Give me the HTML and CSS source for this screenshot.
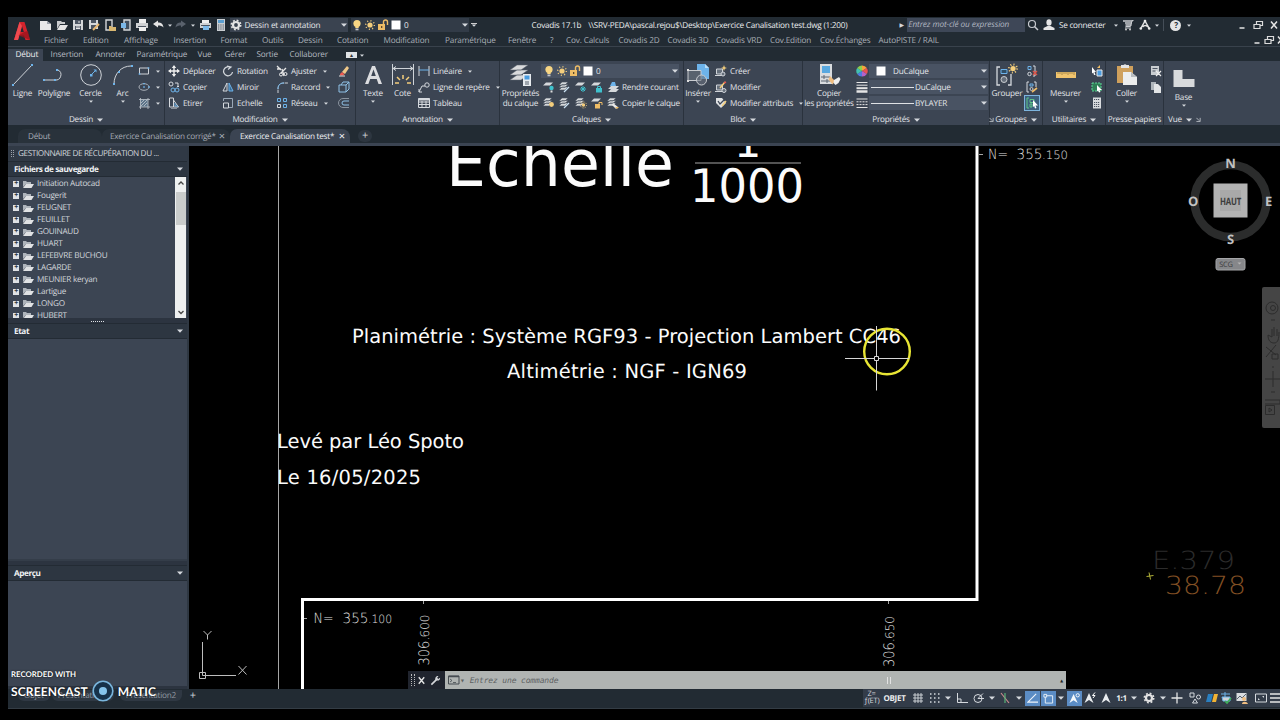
FILE: index.html
```html
<!DOCTYPE html>
<html lang="fr">
<head>
    <meta charset="UTF-8">
    <meta name="viewport" content="width=device-width, initial-scale=1.0">
    <title>Covadis 17.1b</title>
    <link rel="stylesheet" href="styles.css">
</head>
<body>
    <!-- icon set -->
    <svg class="sprite" width="0" height="0">
        <symbol id="caret" viewBox="0 0 6 4"><path d="M0 .5h6L3 3.8z" fill="#d5d9de"/></symbol>
        <symbol id="new" viewBox="0 0 12 12"><path d="M0 2h7l4 3v6H0z" fill="#e8e8e8"/><path d="M7 2v3h4" fill="#9aa0a8"/></symbol>
        <symbol id="open" viewBox="0 0 12 12"><path d="M1 10V2h4l1 1h3v2H4z" fill="#c9cbcd"/><path d="M4 6h8l-3 5H1z" fill="#e5e5e5"/></symbol>
        <symbol id="save" viewBox="0 0 12 12"><path d="M1 1h10v10H1z" fill="#d5d7d9"/><path d="M3 1h6v4H3zM3 7h6v4H3z" fill="#4c5562"/><path d="M4 8h4M4 9.500h4M7 2v2" stroke="#e6e6e6"/></symbol>
        <symbol id="saveas" viewBox="0 0 12 12"><path d="M1 1h9v9H1z" fill="#d5d7d9"/><path d="M3 1h5v3H3zM3 6h5v4H3z" fill="#4c5562"/><path d="M5 11l6-6" stroke="#e9b872" stroke-width="2"/></symbol>
        <symbol id="webopen" viewBox="0 0 12 12"><path d="M2 1h6v10H2z" fill="none" stroke="#d5d7d9" stroke-width="1.400"/><path d="M5 7h2l1 1h4v4H5z" fill="#d9b871"/></symbol>
        <symbol id="websave" viewBox="0 0 12 12"><path d="M4 1h6v10H4z" fill="#42505f" stroke="#d5d7d9" stroke-width="1.400"/><path d="M1 4h5v5H1z" fill="#7bb8e8"/></symbol>
        <symbol id="print" viewBox="0 0 12 12"><path d="M3 0h7v4H3z" fill="#eee"/><path d="M0 4h12v5H0z" fill="#cfd1d3"/><path d="M3 7h7v5H3z" fill="#eee"/><path d="M2 7.500h8" stroke="#4c5562"/></symbol>
        <symbol id="plot" viewBox="0 0 12 12"><path d="M3 1h7v3H3z" fill="#eee"/><path d="M1 4h11v5H1z" fill="#cfd1d3"/><path d="M4 7h6v4H4z" fill="#7bb8e8"/><path d="M2 6.500h9" stroke="#4c5562"/></symbol>
        <symbol id="undo" viewBox="0 0 12 12"><path d="M1 5l5-3.500v2c3 0 5 1 5.500 5C10 7 8.500 6.500 6 6.500v2z" fill="#e5e5e5"/></symbol>
        <symbol id="redo" viewBox="0 0 12 12"><path d="M11 5L6 1.500v2c-3 0-5 1-5.500 5C2 7 3.500 6.500 6 6.500v2z" fill="#59616c"/></symbol>
        <symbol id="calc" viewBox="0 0 12 12"><path d="M2 0h8v12H2z" fill="#c9cdd1"/><path d="M3 1h6v3H3z" fill="#5c9fd0"/><path d="M3 6h6M3 8h6M3 10h6" stroke="#555f6b" stroke-dasharray="1.300 1"/></symbol>
        <symbol id="gear" viewBox="0 0 12 12"><circle cx="6" cy="6" r="3" fill="none" stroke="#e3e3e3" stroke-width="2.200"/><circle cx="6" cy="6" r="4.700" fill="none" stroke="#e3e3e3" stroke-width="1.600" stroke-dasharray="1.850 1.850"/></symbol>
        <symbol id="bulb" viewBox="0 0 12 12"><circle cx="6" cy="4.500" r="3.600" fill="#f7d583"/><path d="M4.300 7h3.400v2H4.300z" fill="#f7d583"/><path d="M4.500 9.500h3v1.800h-3z" fill="#c4c7ca"/></symbol>
        <symbol id="sun" viewBox="0 0 12 12"><circle cx="6" cy="6" r="2.600" fill="#f3cd7c"/><circle cx="6" cy="6" r="4.300" fill="none" stroke="#f3cd7c" stroke-width="1.500" stroke-dasharray="1 2.370"/></symbol>
        <symbol id="lock" viewBox="0 0 12 12"><path d="M1 5h7v6H1z" fill="#efbd66"/><path d="M6.500 5V3a2 2 0 0 1 4 0v3" fill="none" stroke="#efbd66" stroke-width="1.400"/><path d="M4 7h1.300v2H4z" fill="#5a4a30"/></symbol>
        <symbol id="white" viewBox="0 0 12 12"><path d="M1.500 1.500h9v9h-9z" fill="#fff"/></symbol>
        <symbol id="search" viewBox="0 0 12 12"><circle cx="5" cy="5" r="3.500" fill="none" stroke="#c8cbd0" stroke-width="1.200"/><path d="M7.500 7.500L11 11" stroke="#c8cbd0" stroke-width="1.500"/></symbol>
        <symbol id="user" viewBox="0 0 12 12"><ellipse cx="6" cy="3.500" rx="2.600" ry="3.200" fill="#e5e5e5"/><path d="M.5 11V9l4-2h3l4 2v2z" fill="#e5e5e5"/></symbol>
        <symbol id="cart" viewBox="0 0 12 12"><path d="M1 2h9.500M3 4h7M3.500 6h6" stroke="#c9ccd0" stroke-width="1.300"/><path d="M11.500 1.500h-1.500l-1.500 6H3.500M3 9h6" fill="none" stroke="#c9ccd0"/><circle cx="4" cy="10.500" r="1" fill="#ccc"/><circle cx="8" cy="10.500" r="1" fill="#ccc"/></symbol>
        <symbol id="adsk" viewBox="0 0 12 12"><path d="M2 9L6 2l4 7M3.500 8c2-2 3.500-2 5.500 0" fill="none" stroke="#e3e3e3" stroke-width="1.500"/><circle cx="6" cy="2" r="1.300" fill="#eee"/><circle cx="1.800" cy="9.500" r="1.300" fill="#eee"/><circle cx="10.200" cy="9.500" r="1.300" fill="#eee"/></symbol>
        <symbol id="min" viewBox="0 0 12 12"><path d="M3.500 9h5" stroke="#e5e5e5" stroke-width="1.500"/></symbol>
        <symbol id="restore" viewBox="0 0 12 12"><path d="M2 5.500h6v4H2zM4.500 5V2.500h6v4H8.500" fill="none" stroke="#dcdcdc" stroke-width="1.200"/></symbol>
        <symbol id="close" viewBox="0 0 12 12"><path d="M3 2.500l6 7M9 2.500l-6 7" stroke="#e5e5e5" stroke-width="1.500"/></symbol>

        <symbol id="line" viewBox="0 0 24 24"><path d="M2 22L21 2" stroke="#cfd3d8"/><path d="M1 21h2v2H1zM20 1h2v2h-2z" fill="#6db3ea"/></symbol>
        <symbol id="pline" viewBox="0 0 24 24"><path d="M2 17h11a5.300 5.300 0 0 0 3-10" fill="none" stroke="#cfd3d8"/><path d="M1 16h2v2H1zM14 6h2v2h-2zM12 16h2v2h-2z" fill="#6db3ea"/></symbol>
        <symbol id="circle" viewBox="0 0 24 24"><circle cx="12" cy="12" r="10.300" fill="none" stroke="#cfd3d8"/><path d="M12 12l4-4" stroke="#6db3ea"/><path d="M11 11h2.500v2.500H11zM14.500 6.500h3v3z" fill="#6db3ea"/></symbol>
        <symbol id="arc" viewBox="0 0 24 24"><path d="M3 21C3 11 10 3 20 3" fill="none" stroke="#cfd3d8"/><path d="M2 20h2v2H2zM7 8h2v2H7zM20 2h2v2h-2z" fill="#6db3ea"/></symbol>
        <symbol id="rect" viewBox="0 0 12 12"><path d="M1.500 3h9v6h-9z" fill="none" stroke="#cfd3d8"/><path d="M.7 8.200h1.600v1.600H.7zM9.700 2.200h1.600v1.600H9.700z" fill="#6db3ea"/></symbol>
        <symbol id="ellipse" viewBox="0 0 12 12"><ellipse cx="6" cy="6" rx="5" ry="3.300" fill="none" stroke="#aab0b8"/><path d="M5.200 5.200h1.600v1.600H5.200zM10.200 5.200h1.600v1.600h-1.600zM5.200 2h1.600v1.200H5.200z" fill="#6db3ea"/></symbol>
        <symbol id="hatch" viewBox="0 0 12 12"><path d="M2.500 2.500h7.500v7.500H2.500z" fill="#5d7489"/><path d="M1 2.500h11M1 10h11M2.500 1v11M10 1v11M3 6l3-3M3 9l6-6M6 9l3-3" stroke="#c0c7ce" stroke-width=".8"/></symbol>
        <symbol id="move" viewBox="0 0 12 12"><path d="M6 1v10M1 6h10" stroke="#eee" stroke-width="1.400"/><path d="M6 0l2.200 3H3.800zM6 12l2.200-3H3.800zM0 6l3-2.200v4.400zM12 6L9 3.800v4.400z" fill="#eee"/></symbol>
        <symbol id="rotate" viewBox="0 0 12 12"><path d="M8 2.200A4.500 4.500 0 1 0 10.500 7M5 1l4 1-3 2.500" fill="none" stroke="#d5d9de" stroke-width="1.200"/></symbol>
        <symbol id="trim" viewBox="0 0 12 12"><path d="M1 1l4 4M1 4h4M6 4l2 7M10 3L5 8" stroke="#e5e5e5" stroke-width="1.300"/><circle cx="5" cy="9.500" r="1.500" fill="none" stroke="#eee"/><circle cx="9.500" cy="9" r="1.500" fill="none" stroke="#eee"/></symbol>
        <symbol id="copy" viewBox="0 0 12 12"><circle cx="3" cy="3" r="2" fill="none" stroke="#d5d9de"/><path d="M7 2h3v3M9 5l1 1 1-1" fill="none" stroke="#d5d9de"/><circle cx="5" cy="9" r="2" fill="none" stroke="#6db3ea"/><circle cx="9" cy="9" r="2" fill="none" stroke="#6db3ea"/></symbol>
        <symbol id="mirror" viewBox="0 0 12 12"><path d="M5 2v8H1z" fill="none" stroke="#d5d9de"/><path d="M7 2v8h4z" fill="#386a92" stroke="#6db3ea"/></symbol>
        <symbol id="fillet" viewBox="0 0 12 12"><path d="M2 12V8c0-4 2-6 6-6h4" fill="none" stroke="#cfd3d8" stroke-dasharray="3 .6"/><path d="M2 8c0-4 2-6 6-6" fill="none" stroke="#6db3ea"/></symbol>
        <symbol id="stretch" viewBox="0 0 12 12"><path d="M1.500 1h4v9h-4zM5.500 3l5 7h-5M3 12h6" fill="none" stroke="#d5d9de"/><path d="M7 6v3h3" stroke="#6db3ea" fill="none"/></symbol>
        <symbol id="scale" viewBox="0 0 12 12"><path d="M1.500 4V1.500h9v9H7" fill="none" stroke="#9aa8b7"/><path d="M1.500 6h5v5h-5z" fill="none" stroke="#d5d9de"/></symbol>
        <symbol id="array" viewBox="0 0 12 12"><path d="M1.500 1.500h3v3h-3zM7.500 1.500h3v3h-3zM7.500 7.500h3v3h-3z" fill="none" stroke="#6db3ea"/><path d="M1.500 7.500h3v3h-3z" fill="none" stroke="#d5d9de"/></symbol>
        <symbol id="erase" viewBox="0 0 12 12"><path d="M4 7l5-6 2 2-4 6z" fill="#f0c889"/><path d="M2 9l2-2 2.500 2.200L5 10.500H2z" fill="#f05a50"/><path d="M1 11h6" stroke="#ddd"/></symbol>
        <symbol id="box3d" viewBox="0 0 12 12"><path d="M1 4h7v7H1zM3 4l2-3h6v7l-3 3M8 4l3-3" fill="none" stroke="#8fc2e8"/></symbol>
        <symbol id="offset" viewBox="0 0 12 12"><path d="M11 1.500H5a4.500 4.500 0 0 0 0 9h6" fill="none" stroke="#8b949f"/><path d="M11 4H6a2 2 0 0 0 0 4h5" fill="none" stroke="#8fc2e8"/></symbol>
        <symbol id="text" viewBox="0 0 24 24"><path d="M4 21L11 3h3l7 18h-3.500l-1.800-5H9.200l-1.800 5zM10.200 13h4.600L12.500 6.500z" fill="#dcdde0"/></symbol>
        <symbol id="dim" viewBox="0 0 24 24"><path d="M1.500 1v21M22.500 1v21M2 5.500h20M2 5.500l3-2M2 5.500l3 2M22 5.500l-3-2M22 5.500l-3 2" stroke="#cfd3d8" fill="none"/><path d="M12 12v4M6 14l3 3M18 14l-3 3M4 20h4M16 20h4" stroke="#f3cd7c" stroke-width="1.500"/></symbol>
        <symbol id="linear" viewBox="0 0 12 12"><path d="M1 1v10M11 1v10" stroke="#d5d9de"/><path d="M1 5h10" stroke="#6db3ea"/></symbol>
        <symbol id="leader" viewBox="0 0 12 12"><path d="M1 11L4 5h3M1 8v3h3" fill="none" stroke="#d5d9de"/><circle cx="9" cy="4" r="2.200" fill="none" stroke="#d5d9de"/></symbol>
        <symbol id="table" viewBox="0 0 12 12"><path d="M.5 1.500h11v9H.5zM.5 5h11M.5 7.500h11M4 4v6.500M8 4v6.500" fill="none" stroke="#d5d9de"/><path d="M.5 1.500h11v2H.5z" fill="#d5d9de"/></symbol>
        <symbol id="layers" viewBox="0 0 24 24"><path d="M1 17l7-5h11l-7 5zM1 12l7-5h11l-7 5zM1 7l7-5h11l-7 5z" fill="#d9dadc" stroke="#5a636f" stroke-width=".5"/><path d="M14 11h8v12h-8z" fill="#e7ebef"/><path d="M15.500 12.500h5v4h-5z" fill="#4a9ce0"/><path d="M16 19h4M16 21h4" stroke="#56606c"/></symbol>
        <symbol id="lay" viewBox="0 0 12 12"><path d="M0 4l3-3h6L6 4zM0 6.500L3 3.500h6L6 6.500zM0 9l3-3h6L6 9z" fill="#d5d8db" stroke="#48515e" stroke-width=".6"/></symbol>
        <symbol id="lay1" viewBox="0 0 12 12"><path d="M0 4.500L3 1.500h7l-3 3z" fill="#d5d8db"/></symbol>
        <symbol id="layoff" viewBox="0 0 12 12"><use href="#lay1"/><circle cx="8.500" cy="7" r="2.200" fill="#3fc1cd"/><path d="M7.500 9.500h2v2h-2z" fill="#ddd"/></symbol>
        <symbol id="layiso" viewBox="0 0 12 12"><use href="#lay"/><path d="M5 11l5-5" stroke="#cbe2f4" stroke-width="1.300"/></symbol>
        <symbol id="layfrz" viewBox="0 0 12 12"><use href="#lay1"/><path d="M8 5v6M5 8h6M6 6l4 4M10 6l-4 4" stroke="#3fc1cd"/></symbol>
        <symbol id="laylck" viewBox="0 0 12 12"><use href="#lay1"/><path d="M5 7h6v4.500H5z" fill="#3fc1cd"/><path d="M6.500 7V5.500h3V7" fill="none" stroke="#3fc1cd"/></symbol>
        <symbol id="laycur" viewBox="0 0 12 12"><path d="M1 8l3-3h8l-3 3zM1 11l3-3h8l-3 3z" fill="#d5d8db"/><path d="M3 5h6l-1-4H5z" fill="#6db3ea"/></symbol>
        <symbol id="layon" viewBox="0 0 12 12"><use href="#lay"/><circle cx="8.500" cy="7.500" r="2.400" fill="#f3cd7c"/></symbol>
        <symbol id="laythw" viewBox="0 0 12 12"><use href="#lay"/><circle cx="8.500" cy="8" r="1.700" fill="#f3cd7c"/><circle cx="8.500" cy="8" r="3" fill="none" stroke="#f3cd7c" stroke-dasharray="1 1.300"/></symbol>
        <symbol id="layunl" viewBox="0 0 12 12"><use href="#lay1"/><path d="M4 7h5v4.500H4z" fill="#efbd66"/><path d="M8 7V5.500h3V8" fill="none" stroke="#efbd66"/></symbol>
        <symbol id="laycpy" viewBox="0 0 12 12"><use href="#lay"/><path d="M6 6l5 4-2 2-4-4z" fill="#e8e8e8"/><path d="M8 10l2 2 2-2z" fill="#efbd66"/></symbol>
        <symbol id="insert" viewBox="0 0 24 24"><path d="M11 1h8l4 4v11H11z" fill="#6db3ea"/><path d="M19 1v4h4" fill="#b9dcf5"/><path d="M2 7.500h13v10H2z" fill="#59626e" stroke="#c9ccd0"/><circle cx="15.500" cy="17" r="5" fill="#69727e" fill-opacity=".6" stroke="#c9ccd0"/><path d="M1 17h2v2H1zM1 6h2v2H1z" fill="#ddd"/></symbol>
        <symbol id="bcreate" viewBox="0 0 12 12"><path d="M1.500 4h6v5h-6zM0 10.500h9" fill="#66707c" stroke="#cfd3d8"/><circle cx="8" cy="9" r="2" fill="#66707c" stroke="#cfd3d8"/><path d="M9 0l.8 2.200L12 3l-2.200.8L9 6l-.8-2.200L6 3l2.200-.8z" fill="#f5cf7c"/></symbol>
        <symbol id="bedit" viewBox="0 0 12 12"><path d="M1.500 4h6v5h-6zM0 10.500h9" fill="#66707c" stroke="#cfd3d8"/><circle cx="9" cy="9.500" r="2" fill="#66707c" stroke="#cfd3d8"/><path d="M5 7l5-6" stroke="#f5cf7c" stroke-width="1.500"/><path d="M9 2l2-1" stroke="#e85a4f" stroke-width="1.500"/></symbol>
        <symbol id="battr" viewBox="0 0 12 12"><path d="M1 1h6l4 5-5 5-5-5z" fill="#dfe1e3"/><path d="M3 4l2 3 6-6" fill="none" stroke="#3d4654" stroke-width="1.300"/><path d="M7 9l4-5" stroke="#f5cf7c" stroke-width="1.500"/></symbol>
        <symbol id="match" viewBox="0 0 24 24"><path d="M3 1h12v20H3z" fill="#d9dcdf"/><path d="M5 3h8v7H5z" fill="#58a8e0"/><path d="M4 14h9M4 18h9M7 12v4M10 16v4" stroke="#5b6470"/><path d="M13 13l5 5-2.500 3.500-4-5z" fill="#efbd80"/><path d="M17 17l5-3 1.500 2-2 4-3 2-2-2z" fill="#eee"/></symbol>
        <symbol id="wheel" viewBox="0 0 12 12"><path d="M6 6V.5A5.500 5.500 0 0 1 10.800 3z" fill="#f6a33c"/><path d="M6 6l4.800-3a5.500 5.500 0 0 1 0 6z" fill="#e85252"/><path d="M6 6l4.800 3A5.500 5.500 0 0 1 6 11.500z" fill="#b562c8"/><path d="M6 6v5.500A5.500 5.500 0 0 1 1.200 9z" fill="#4f7be0"/><path d="M6 6L1.200 9a5.500 5.500 0 0 1 0-6z" fill="#43c0b0"/><path d="M6 6L1.200 3A5.500 5.500 0 0 1 6 .5z" fill="#8ed04c"/></symbol>
        <symbol id="weight" viewBox="0 0 12 12"><path d="M.5 1.500h11M.5 4.200h11" stroke="#e5e5e5"/><path d="M.5 7.200h11" stroke="#e5e5e5" stroke-width="2"/><path d="M.5 10.500h11" stroke="#e5e5e5" stroke-width="2.500"/></symbol>
        <symbol id="ltype" viewBox="0 0 12 12"><path d="M.5 2h11M.5 10.500h11" stroke="#e5e5e5"/><path d="M.5 4.800h11M.5 7.600h11" stroke="#e5e5e5" stroke-dasharray="2 1"/></symbol>
        <symbol id="group" viewBox="0 0 24 24"><path d="M5 4H2v18h3M13 22h3V11" fill="none" stroke="#d5d9de" stroke-width="1.300"/><path d="M6 6.500h6v4H6z" fill="#2f4f68" stroke="#6db3ea"/><circle cx="9" cy="16.500" r="3" fill="#66707c" stroke="#c9ccd0"/><circle cx="18" cy="5.500" r="2.600" fill="#f5cf7c"/><circle cx="18" cy="5.500" r="4" fill="none" stroke="#f5cf7c" stroke-width="2" stroke-dasharray="1 2.140"/></symbol>
        <symbol id="ungrp" viewBox="0 0 12 12"><path d="M2 1.500h3v3H2z" fill="none" stroke="#6db3ea"/><circle cx="3.500" cy="9" r="1.700" fill="none" stroke="#d5d9de"/><path d="M7 1h2v10H7" fill="none" stroke="#d5d9de"/><path d="M7 6l4 4M11 6l-4 4" stroke="#e05548" stroke-width="1.400"/></symbol>
        <symbol id="grpedit" viewBox="0 0 12 12"><path d="M3 1H1v10h2M8 1h2v5" fill="none" stroke="#d5d9de"/><path d="M4 3h3v2H4z" fill="none" stroke="#6db3ea"/><circle cx="5.500" cy="8" r="1.500" fill="none" stroke="#ccc"/><path d="M6 11l5-4" stroke="#efbd66" stroke-width="1.700"/></symbol>
        <symbol id="grpsel" viewBox="0 0 12 12"><path d="M3 1H1v10h2" fill="none" stroke="#5fc487"/><path d="M4 2.500h4v3H4zM4 7h2v3H4z" fill="none" stroke="#5fc487"/><path d="M7 3l5 5.500H9.500L10.500 11 9 11.500 8.200 9 7 10z" fill="#fff"/></symbol>
        <symbol id="measure" viewBox="0 0 24 24"><path d="M2 9h20v6H2z" fill="#f1c46d"/><path d="M4 9v2M6 9v2M8 9v3M10 9v2M12 9v2M14 9v3M16 9v2M18 9v2M20 9v3" stroke="#7b6538" stroke-width=".6"/></symbol>
        <symbol id="qsel" viewBox="0 0 12 12"><path d="M1 2l4 5H3.500L4.500 10 3 10 2.300 7.500 1 8.500z" fill="#fff"/><path d="M6 5h5v6H6z" fill="#4a9ce0" stroke="#e5e5e5"/><path d="M6 3L9 0v3z" fill="#efbd66"/></symbol>
        <symbol id="selall" viewBox="0 0 12 12"><path d="M1 2h9v8H1z" fill="#2f7f56" stroke="#5fd497" stroke-dasharray="2 1"/><path d="M6 4l5 5H8.500L9.500 11 8 11.500 7.200 9.500 6 10.500z" fill="#fff"/></symbol>
        <symbol id="calc2" viewBox="0 0 12 12"><path d="M2 .5h8v11H2z" fill="#d9dcdf"/><path d="M3 2.500h6M3 5.500h6M3 7.500h6M3 9.500h6" stroke="#4c5562" stroke-dasharray="1.200 .8"/></symbol>
        <symbol id="paste" viewBox="0 0 24 24"><path d="M2 3h16v17H2z" fill="#cfa05c"/><path d="M6 2h2.500a1.800 1.800 0 0 1 3 0H14v3H6z" fill="#e5e5e5"/><path d="M8 9h8l6 5v8H8z" fill="#eceded"/><path d="M16 9v5h6" fill="#b9bdc1"/></symbol>
        <symbol id="cut" viewBox="0 0 12 12"><path d="M1 1h8v9H1z" fill="#c9cdd1"/><path d="M2.500 3.500h5M2.500 6h3" stroke="#4c5562"/><path d="M6 6l5 5M11 6l-5 5" stroke="#eee" stroke-width="1.200"/></symbol>
        <symbol id="cpy2" viewBox="0 0 12 12"><path d="M1 1h5v8H1z" fill="#aeb4ba"/><path d="M4 3h4l3 3v6H4z" fill="#e2e4e6"/></symbol>
        <symbol id="base" viewBox="0 0 24 24"><path d="M1.500 3h9v9h12v8h-21z" fill="#d8dadc"/></symbol>
        <symbol id="folder" viewBox="0 0 12 12"><path d="M1 9V3h3l1 1h4v2H4z" fill="#aeb4bb"/><path d="M4 6h8l-2.500 4H1z" fill="#e0e2e4"/></symbol>
        <symbol id="wrench" viewBox="0 0 12 12"><path d="M1.500 10.500L7 5" stroke="#d5d7da" stroke-width="1.800"/><path d="M6 5.500C5 3 7 .8 9.300 1.200L7.800 3l1.200 1.300L11 3c.3 2.500-2 4-5 2.500z" fill="#d5d7da"/></symbol>
        <symbol id="gridon" viewBox="0 0 12 12"><path d="M3 1v10M6 1v10M9 1v10M1 3h10M1 6h10M1 9h10" stroke="#d5d9de" stroke-width=".9"/></symbol>
        <symbol id="snap" viewBox="0 0 12 12"><path d="M1 2h11M1 6h11M1 10h11" stroke="#d5d9de" stroke-width="1.500" stroke-dasharray="1.500 2.500"/></symbol>
        <symbol id="ortho" viewBox="0 0 12 12"><path d="M1.500 1v9.500H12M1.500 7h3.500v3.500" fill="none" stroke="#d5d9de"/></symbol>
        <symbol id="polar" viewBox="0 0 12 12"><circle cx="5" cy="6.500" r="4" fill="none" stroke="#d5d9de"/><path d="M5 6.500h6M5 6.500l5-5" stroke="#d5d9de"/></symbol>
        <symbol id="iso" viewBox="0 0 12 12"><path d="M2 1l8 10" stroke="#c98b8e" stroke-width="1.200"/><path d="M6 1v10" stroke="#58b378" stroke-width="1.200"/></symbol>
        <symbol id="otrack" viewBox="0 0 12 12"><path d="M10 1L1 10h11" fill="none" stroke="#eef4fa" stroke-width="1.200"/></symbol>
        <symbol id="osnap" viewBox="0 0 12 12"><path d="M2.500 3h8v8h-8z" fill="none" stroke="#eef4fa"/><path d="M1 1.500h3v3H1z" fill="#5b8cc4" stroke="#eef4fa"/></symbol>
        <symbol id="anno" viewBox="0 0 12 12"><path d="M6 1l4.500 10L6 8l-4.500 3z" fill="#e9ecef"/></symbol>
        <symbol id="annovis" viewBox="0 0 12 12"><path d="M5 1l4.500 10L5 8 .5 11z" fill="#f5f8fb"/><circle cx="9.500" cy="2.500" r="1.800" fill="none" stroke="#fff"/></symbol>
        <symbol id="annoauto" viewBox="0 0 12 12"><path d="M5 1l4.500 10L5 8 .5 11z" fill="#e9ecef"/><path d="M11 .5L8.500 3.500H11L9 6" fill="none" stroke="#fff"/></symbol>
        <symbol id="plus" viewBox="0 0 12 12"><path d="M6 .5v11M.5 6h11" stroke="#e5e5e5" stroke-width="1.300"/></symbol>
        <symbol id="isolate" viewBox="0 0 12 12"><path d="M1 1h4v4H1zM6 7l2.500 4h-5z" fill="none" stroke="#d5d9de"/><circle cx="9.500" cy="5" r="2" fill="none" stroke="#d5d9de"/></symbol>
        <symbol id="flag" viewBox="0 0 12 12"><path d="M2 2h5l-2 8H0z" fill="#2a7fc0"/><path d="M8 2h4l-2 8H6z" fill="#f1b334"/></symbol>
        <symbol id="sync" viewBox="0 0 12 12"><path d="M1 2h9M5 0v5M2 5h8v4H3z" stroke="#6db3ea" fill="#cfd3d8"/><path d="M5 9l2 2 4-5" fill="none" stroke="#3fae5a" stroke-width="1.700"/></symbol>
        <symbol id="perf" viewBox="0 0 12 12"><path d="M.5 1h10v8H.5z" fill="#d9dcdf"/><path d="M1 7l3-3 2 2 4-4" fill="none" stroke="#56606c"/><circle cx="8" cy="7" r="2" fill="#efbd80"/><path d="M6 12c0-3 5-3 6 0z" fill="#efbd80"/></symbol>
        <symbol id="full" viewBox="0 0 12 12"><path d="M.5 2h11v8H.5z" fill="none" stroke="#d5d9de"/><path d="M3 8V6l2 2zM9 4v2L7 4z" fill="#d5d9de"/></symbol>
        <symbol id="burger" viewBox="0 0 12 12"><path d="M0 2h12M0 6h12M0 10h12" stroke="#e5e5e5" stroke-width="1.500"/></symbol>
        <symbol id="corner" viewBox="0 0 6 6"><path d="M.5 1l3.500 3.500M5 1v4.500H.5" fill="none" stroke="#c3c8ce"/></symbol>
    </svg>

    <div class="app">
        <header class="top">
            <svg class="logo" viewBox="0 0 18 20"><path d="M1 19L6.500 1h5L17 19h-4.500l-1.500-4.500H6.500L5 19z" fill="#d3232c"/><path d="M7.500 11L9 5l1.800 6z" fill="#222b33"/><path d="M1 19L6.500 1 9 5 5 19z" fill="#ef4a4f"/><path d="M5.500 14.500L11 11l4-1 2 9z" fill="#98141c" opacity=".75"/></svg>
            <div class="top-rows">
                <div class="titlebar">
                    <div class="qat">
                        <svg><use href="#new"/></svg><svg><use href="#open"/></svg><svg><use href="#save"/></svg><svg><use href="#saveas"/></svg><svg><use href="#webopen"/></svg><svg><use href="#websave"/></svg><svg><use href="#print"/></svg><svg><use href="#undo"/></svg><svg class="caret s"><use href="#caret"/></svg><svg><use href="#redo"/></svg><svg class="caret s"><use href="#caret"/></svg><svg><use href="#plot"/></svg><svg><use href="#calc"/></svg>
                    </div>
                    <div class="combo workspace"><svg><use href="#gear"/></svg><span>Dessin et annotation</span><svg class="caret"><use href="#caret"/></svg></div>
                    <div class="combo layer-top"><svg><use href="#bulb"/></svg><svg><use href="#sun"/></svg><svg><use href="#lock"/></svg><svg><use href="#white"/></svg><span>0</span><svg class="caret"><use href="#caret"/></svg></div>
                    <svg class="caret more"><use href="#caret"/></svg>
                    <div class="doc-title"><span>Covadis 17.1b</span><span>\\SRV-PEDA\pascal.rejou$\Desktop\Exercice Canalisation test.dwg (1:200)</span></div>
                    <span class="arrow">&#9654;</span>
                    <div class="search">Entrez mot-clé ou expression</div>
                    <div class="account">
                        <svg><use href="#search"/></svg><svg><use href="#user"/></svg><span>Se connecter</span><svg class="caret s"><use href="#caret"/></svg><svg><use href="#cart"/></svg><svg><use href="#adsk"/></svg><svg class="caret s"><use href="#caret"/></svg><i class="sep"></i><b class="help">?</b><svg class="caret s"><use href="#caret"/></svg>
                    </div>
                    <div class="winbtns"><svg><use href="#min"/></svg><svg><use href="#restore"/></svg><svg><use href="#close"/></svg></div>
                </div>
                <nav class="menubar">
                    <span>Fichier</span><span>Edition</span><span>Affichage</span><span>Insertion</span><span>Format</span><span>Outils</span><span>Dessin</span><span>Cotation</span><span>Modification</span><span>Paramétrique</span><span>Fenêtre</span><span>?</span><span>Cov. Calculs</span><span>Covadis 2D</span><span>Covadis 3D</span><span>Covadis VRD</span><span>Cov.Edition</span><span>Cov.Échanges</span><span>AutoPISTE / RAIL</span>
                    <svg><use href="#min"/></svg><svg><use href="#restore"/></svg><svg><use href="#close"/></svg>
                </nav>
            </div>
        </header>

        <nav class="ribbon-tabs">
            <span class="active">Début</span><span>Insertion</span><span>Annoter</span><span>Paramétrique</span><span>Vue</span><span>Gérer</span><span>Sortie</span><span>Collaborer</span><i class="mini">▴</i><svg class="caret s"><use href="#caret"/></svg>
        </nav>

        <div class="ribbon">
            <section class="panel dessin">
                <div class="tools">
                    <div class="big w29"><svg><use href="#line"/></svg><span>Ligne</span></div>
                    <div class="big w34"><svg><use href="#pline"/></svg><span>Polyligne</span></div>
                    <div class="big w39"><svg><use href="#circle"/></svg><span>Cercle</span><svg class="caret s"><use href="#caret"/></svg></div>
                    <div class="big w24"><svg><use href="#arc"/></svg><span>Arc</span><svg class="caret s"><use href="#caret"/></svg></div>
                    <div class="col">
                        <div class="tool"><svg><use href="#rect"/></svg><svg class="caret s"><use href="#caret"/></svg></div>
                        <div class="tool"><svg><use href="#ellipse"/></svg><svg class="caret s"><use href="#caret"/></svg></div>
                        <div class="tool"><svg><use href="#hatch"/></svg><svg class="caret s"><use href="#caret"/></svg></div>
                    </div>
                </div>
                <h2>Dessin<svg class="caret"><use href="#caret"/></svg></h2>
            </section>
            <section class="panel modification">
                <div class="tools">
                    <div class="col w54">
                        <div class="tool"><svg><use href="#move"/></svg><span>Déplacer</span></div>
                        <div class="tool"><svg><use href="#copy"/></svg><span>Copier</span></div>
                        <div class="tool"><svg><use href="#stretch"/></svg><span>Etirer</span></div>
                    </div>
                    <div class="col w54">
                        <div class="tool"><svg><use href="#rotate"/></svg><span>Rotation</span></div>
                        <div class="tool"><svg><use href="#mirror"/></svg><span>Miroir</span></div>
                        <div class="tool"><svg><use href="#scale"/></svg><span>Echelle</span></div>
                    </div>
                    <div class="col w62">
                        <div class="tool"><svg><use href="#trim"/></svg><span>Ajuster</span><svg class="caret s"><use href="#caret"/></svg></div>
                        <div class="tool"><svg><use href="#fillet"/></svg><span>Raccord</span><svg class="caret s"><use href="#caret"/></svg></div>
                        <div class="tool"><svg><use href="#array"/></svg><span>Réseau</span><svg class="caret s"><use href="#caret"/></svg></div>
                    </div>
                    <div class="col">
                        <div class="tool"><svg><use href="#erase"/></svg></div>
                        <div class="tool"><svg><use href="#box3d"/></svg></div>
                        <div class="tool"><svg><use href="#offset"/></svg></div>
                    </div>
                </div>
                <h2>Modification<svg class="caret"><use href="#caret"/></svg></h2>
            </section>
            <section class="panel annotation">
                <div class="tools">
                    <div class="big w34"><svg><use href="#text"/></svg><span>Texte</span><svg class="caret s"><use href="#caret"/></svg></div>
                    <div class="big w24"><svg><use href="#dim"/></svg><span>Cote</span></div>
                    <div class="col">
                        <div class="tool"><svg><use href="#linear"/></svg><span>Linéaire</span><svg class="caret s"><use href="#caret"/></svg></div>
                        <div class="tool"><svg><use href="#leader"/></svg><span>Ligne de repère</span><svg class="caret s"><use href="#caret"/></svg></div>
                        <div class="tool"><svg><use href="#table"/></svg><span>Tableau</span></div>
                    </div>
                </div>
                <h2>Annotation<svg class="caret"><use href="#caret"/></svg></h2>
            </section>
            <section class="panel calques">
                <div class="tools">
                    <div class="big w40"><svg><use href="#layers"/></svg><span>Propriétés<br>du calque</span></div>
                    <div class="col">
                        <div class="combo layer"><svg><use href="#bulb"/></svg><svg><use href="#sun"/></svg><svg><use href="#lock"/></svg><svg><use href="#white"/></svg><span>0</span><svg class="caret"><use href="#caret"/></svg></div>
                        <div class="tool lays"><svg><use href="#layoff"/></svg><svg><use href="#layiso"/></svg><svg><use href="#layfrz"/></svg><svg><use href="#laylck"/></svg><svg><use href="#laycur"/></svg><span>Rendre courant</span></div>
                        <div class="tool lays"><svg><use href="#layon"/></svg><svg><use href="#layiso"/></svg><svg><use href="#laythw"/></svg><svg><use href="#layunl"/></svg><svg><use href="#laycpy"/></svg><span>Copier le calque</span></div>
                    </div>
                </div>
                <h2>Calques<svg class="caret"><use href="#caret"/></svg></h2>
            </section>
            <section class="panel bloc">
                <div class="tools">
                    <div class="big w28"><svg><use href="#insert"/></svg><span>Insérer</span><svg class="caret s"><use href="#caret"/></svg></div>
                    <div class="col">
                        <div class="tool"><svg><use href="#bcreate"/></svg><span>Créer</span></div>
                        <div class="tool"><svg><use href="#bedit"/></svg><span>Modifier</span></div>
                        <div class="tool"><svg><use href="#battr"/></svg><span>Modifier attributs</span><svg class="caret s"><use href="#caret"/></svg></div>
                    </div>
                </div>
                <h2>Bloc<svg class="caret"><use href="#caret"/></svg></h2>
            </section>
            <section class="panel proprietes">
                <div class="tools">
                    <div class="big w52"><svg><use href="#match"/></svg><span>Copier<br>les propriétés</span></div>
                    <div class="col w14">
                        <div class="tool"><svg><use href="#wheel"/></svg></div>
                        <div class="tool"><svg><use href="#weight"/></svg></div>
                        <div class="tool"><svg><use href="#ltype"/></svg></div>
                    </div>
                    <div class="col combos">
                        <div class="combo"><svg class="swatch"><use href="#white"/></svg><span>DuCalque</span><svg class="caret"><use href="#caret"/></svg></div>
                        <div class="combo"><i class="rule"></i><span>DuCalque</span><svg class="caret"><use href="#caret"/></svg></div>
                        <div class="combo"><i class="rule"></i><span>BYLAYER</span><svg class="caret"><use href="#caret"/></svg></div>
                    </div>
                </div>
                <h2>Propriétés<svg class="caret"><use href="#caret"/></svg><svg class="corner"><use href="#corner"/></svg></h2>
            </section>
            <section class="panel groupes">
                <div class="tools">
                    <div class="big w34"><svg><use href="#group"/></svg><span>Grouper</span></div>
                    <div class="col">
                        <div class="tool"><svg><use href="#ungrp"/></svg></div>
                        <div class="tool"><svg><use href="#grpedit"/></svg></div>
                        <div class="tool on"><svg><use href="#grpsel"/></svg></div>
                    </div>
                </div>
                <h2>Groupes<svg class="caret"><use href="#caret"/></svg></h2>
            </section>
            <section class="panel utilitaires">
                <div class="tools">
                    <div class="big w45"><svg><use href="#measure"/></svg><span>Mesurer</span><svg class="caret s"><use href="#caret"/></svg></div>
                    <div class="col">
                        <div class="tool"><svg><use href="#qsel"/></svg></div>
                        <div class="tool"><svg><use href="#selall"/></svg></div>
                        <div class="tool"><svg><use href="#calc2"/></svg></div>
                    </div>
                </div>
                <h2>Utilitaires<svg class="caret"><use href="#caret"/></svg></h2>
            </section>
            <section class="panel presse">
                <div class="tools">
                    <div class="big w40"><svg><use href="#paste"/></svg><span>Coller</span><svg class="caret s"><use href="#caret"/></svg></div>
                    <div class="col">
                        <div class="tool"><svg><use href="#cut"/></svg></div>
                        <div class="tool"><svg><use href="#cpy2"/></svg></div>
                    </div>
                </div>
                <h2>Presse-papiers</h2>
            </section>
            <section class="panel vue">
                <div class="tools">
                    <div class="big w39 low"><svg><use href="#base"/></svg><span>Base</span><svg class="caret s"><use href="#caret"/></svg></div>
                </div>
                <h2>Vue<svg class="caret"><use href="#caret"/></svg><svg class="corner"><use href="#corner"/></svg></h2>
            </section>
        </div>

        <nav class="file-tabs">
            <div class="ftab start"><span>Début</span></div>
            <div class="ftab second"><span>Exercice Canalisation corrigé*</span><i>✕</i></div>
            <div class="ftab current"><span>Exercice Canalisation test*</span><i>✕</i></div>
            <div class="addtab">+</div>
        </nav>

        <div class="work">
            <aside class="side">
                <div class="side-title"><i class="grip"></i><span>GESTIONNAIRE DE RÉCUPÉRATION DU ...</span></div>
                <div class="side-head"><span>Fichiers de sauvegarde</span><svg class="caret"><use href="#caret"/></svg></div>
                <div class="tree">
                    <ul>
                        <li><i>+</i><svg><use href="#folder"/></svg>Initiation Autocad</li>
                        <li><i>+</i><svg><use href="#folder"/></svg>Fougerit</li>
                        <li><i>+</i><svg><use href="#folder"/></svg>FEUGNET</li>
                        <li><i>+</i><svg><use href="#folder"/></svg>FEUILLET</li>
                        <li><i>+</i><svg><use href="#folder"/></svg>GOUINAUD</li>
                        <li><i>+</i><svg><use href="#folder"/></svg>HUART</li>
                        <li><i>+</i><svg><use href="#folder"/></svg>LEFEBVRE BUCHOU</li>
                        <li><i>+</i><svg><use href="#folder"/></svg>LAGARDE</li>
                        <li><i>+</i><svg><use href="#folder"/></svg>MEUNIER keryan</li>
                        <li><i>+</i><svg><use href="#folder"/></svg>Lartigue</li>
                        <li><i>+</i><svg><use href="#folder"/></svg>LONGO</li>
                        <li><i>+</i><svg><use href="#folder"/></svg>HUBERT</li>
                    </ul>
                    <div class="scrollbar">
                        <svg viewBox="0 0 12 12"><path d="M3.500 7.500L6 5l2.500 2.500" fill="none" stroke="#444" stroke-width="1.300"/></svg>
                        <div class="thumb"></div>
                        <svg viewBox="0 0 12 12"><path d="M3.500 5L6 7.500 8.500 5" fill="none" stroke="#444" stroke-width="1.300"/></svg>
                    </div>
                </div>
                <div class="splitter"><i></i></div>
                <div class="side-head"><span>Etat</span><svg class="caret"><use href="#caret"/></svg></div>
                <div class="side-body etat"></div>
                <div class="side-head"><span>Aperçu</span><svg class="caret"><use href="#caret"/></svg></div>
                <div class="side-body apercu"></div>
            </aside>

            <main class="canvas">
                <!-- drawing space, in window coordinates -->
                <svg class="drawing" viewBox="189 146 1091 543" width="1091" height="543">
                    <g class="frame">
                        <path class="thin" d="M278.500 146V689"/>
                        <path class="thick" d="M977 146V599.500H302.500V689"/>
                        <path class="thin" d="M979 154.500h4M304 618.500h3M423.500 601v3M888.500 601v3"/>
                    </g>
                    <g class="annot">
                        <text x="446" y="185.500" font-size="65" textLength="228" lengthAdjust="spacingAndGlyphs">Echelle</text>
                        <text x="734" y="157" font-size="43">1</text>
                        <path class="thin" d="M695 163h106"/>
                        <text x="690" y="202" font-size="46" textLength="114" lengthAdjust="spacingAndGlyphs">1000</text>
                        <text x="352" y="342.500" font-size="19.500" textLength="549">Planimétrie : Système RGF93 - Projection Lambert CC46</text>
                        <text x="507" y="378" font-size="19.500" textLength="240">Altimétrie : NGF - IGN69</text>
                        <text x="277" y="448" font-size="19.500" textLength="187">Levé par Léo Spoto</text>
                        <text x="277" y="483.500" font-size="19.500" textLength="144">Le 16/05/2025</text>
                    </g>
                    <g class="coords">
                        <text x="988" y="159" font-size="14" textLength="20" lengthAdjust="spacingAndGlyphs">N=</text>
                        <text x="1016.500" y="159" font-size="14" textLength="26" lengthAdjust="spacingAndGlyphs">355</text>
                        <text x="1042" y="159" font-size="11.500" textLength="26" lengthAdjust="spacingAndGlyphs">.150</text>
                        <text x="313.500" y="623" font-size="14" textLength="20" lengthAdjust="spacingAndGlyphs">N=</text>
                        <text x="342.500" y="623" font-size="14" textLength="26" lengthAdjust="spacingAndGlyphs">355</text>
                        <text x="368" y="623" font-size="11.500" textLength="24" lengthAdjust="spacingAndGlyphs">.100</text>
                        <g transform="translate(429 665.500) rotate(-90)">
                            <text font-size="14.500" textLength="29" lengthAdjust="spacingAndGlyphs">306.</text>
                            <text x="28" font-size="12" textLength="23" lengthAdjust="spacingAndGlyphs">600</text>
                        </g>
                        <g transform="translate(894 667) rotate(-90)">
                            <text font-size="14.500" textLength="29" lengthAdjust="spacingAndGlyphs">306.</text>
                            <text x="28" font-size="12" textLength="23" lengthAdjust="spacingAndGlyphs">650</text>
                        </g>
                        <text class="dim1" x="1152" y="569" font-size="25" textLength="83" lengthAdjust="spacingAndGlyphs">E.379</text>
                        <text class="dim2" x="1165" y="594" font-size="25" textLength="81" lengthAdjust="spacingAndGlyphs">38.78</text>
                        <path d="M1146.500 576.500l7-1M1149 572.500l1.500 7" stroke="#b5b53a"/>
                    </g>
                    <g class="ucs">
                        <path d="M202.500 642v33.500H236M199.500 672.500h6v6h-6zM203.500 631l4 4 4-4M207.500 635v4.500M238.500 666l8 8.500M246.500 666l-8 8.500"/>
                    </g>
                    <g class="viewcube">
                        <circle cx="1230.500" cy="201" r="36" fill="none" stroke="#2b2c2c" stroke-width="8.500"/>
                        <rect x="1213.500" y="183.500" width="34" height="34" fill="#b3b3b3"/>
                        <rect x="1220" y="190" width="21" height="21" fill="#a9a9a9"/>
                        <text class="haut" x="1220" y="204.500" textLength="21" lengthAdjust="spacingAndGlyphs">HAUT</text>
                        <text x="1230.500" y="168.300">N</text>
                        <text x="1193" y="205.500">O</text>
                        <text x="1268.500" y="205.500">E</text>
                        <text x="1230.500" y="243.500">S</text>
                        <rect x="1216" y="258.500" width="29" height="11.500" rx="2" fill="#86878a" stroke="#a5a6a8"/>
                        <text class="scg" x="1226" y="266.500">SCG</text>
                        <path d="M1237.500 262.500h4l-2 2z" fill="#b5b5b5"/>
                    </g>
                    <g class="navbar">
                        <rect x="1262" y="287" width="20" height="141" rx="2" fill="#454545"/>
                        <g fill="none" stroke="#2c2c2c">
                            <circle cx="1272" cy="308" r="6"/><circle cx="1273" cy="308" r="2.500"/>
                            <path d="M1268 335c0 6 3 8 6 8 4 0 5-4 5-11M1268 335l4 2v-8M1274 336v-9M1277 336v-7M1266 347l10 8M1276 345l-10 12M1272 354h6v5h-6zM1273 371v16M1265 379h15M1265 400h15v4h-15M1265.500 405.500h9v9h-9zM1269 408l3 2-3 2z"/>
                            <path d="M1271 320h4M1273 366v2M1271 392h4"/>
                        </g>
                    </g>
                    <circle cx="887" cy="351.500" r="22.800" fill="none" stroke="#e8e534" stroke-width="2.400"/>
                    <path d="M876.500 326v30M876.500 361v29.500M845 358.500h29M879 358.500h30M874.500 356.500h4v4h-4z" fill="none" stroke="#d6d6d6"/>
                </svg>
                <div class="cmdline">
                    <div class="cmd-tools"><i class="dots"></i><svg><use href="#close"/></svg><svg><use href="#wrench"/></svg></div>
                    <div class="cmd-input">
                        <svg class="prompt" viewBox="0 0 12 12"><path d="M.5 2h10.500v8H.5z" fill="none" stroke="#454b50"/><path d="M.5 2.500h10.500" stroke="#454b50" stroke-width="1.500"/><path d="M2 5l2 1.500L2 8M5 8.500h3" fill="none" stroke="#454b50" stroke-width=".8"/></svg>
                        <i class="dn">▾</i><span>Entrez une commande</span><i class="bars"></i><i class="up">▴</i>
                    </div>
                </div>
            </main>
        </div>

        <footer class="bottom">
            <div class="layouts"><span>Objet</span><span>Présentation1</span><span>Présentation2</span><b>+</b></div>
            <div class="status">
                <span class="zfet">Z=<br>ƒ(ET)</span>
                <span class="objet">OBJET</span>
                <svg><use href="#gridon"/></svg><svg><use href="#snap"/></svg><svg class="caret"><use href="#caret"/></svg>
                <svg><use href="#ortho"/></svg><svg><use href="#polar"/></svg><svg class="caret"><use href="#caret"/></svg><svg><use href="#iso"/></svg><svg class="caret"><use href="#caret"/></svg>
                <svg class="on"><use href="#otrack"/></svg><svg class="on"><use href="#osnap"/></svg><svg class="caret"><use href="#caret"/></svg>
                <svg class="on"><use href="#annovis"/></svg><svg><use href="#annoauto"/></svg><svg><use href="#anno"/></svg>
                <span class="ratio">1:1</span><svg class="caret"><use href="#caret"/></svg>
                <svg><use href="#gear"/></svg><svg class="caret"><use href="#caret"/></svg><svg><use href="#plus"/></svg><svg><use href="#isolate"/></svg>
                <svg><use href="#flag"/></svg><svg><use href="#sync"/></svg><svg><use href="#perf"/></svg><svg><use href="#full"/></svg><svg><use href="#burger"/></svg>
            </div>
        </footer>
    </div>

    <div class="watermark">
        <div class="rec">RECORDED WITH</div>
        <div class="brand"><span>SCREENCAST</span><svg viewBox="0 0 22 22"><circle cx="11" cy="11" r="9.800" fill="#17324a" stroke="#7ab6dd" stroke-width="1.600"/><circle cx="11" cy="11" r="4" fill="#86c5ec"/></svg><span>MATIC</span></div>
    </div>
</body>
</html>
```

FILE: styles.css
```css
* {
    box-sizing: border-box;
}
body {
    margin: 0;
    width: 1280px;
    height: 720px;
    overflow: hidden;
    background-color: #000;
    color: #d3d7dc;
    font-family: "Open Sans", "Noto Sans", sans-serif;
    font-size: 8.200px;
    letter-spacing: -0.26px;
    text-rendering: geometricPrecision;
    white-space: nowrap;
}
i, b {
    font-style: normal;
}
svg {
    width: 12px;
    height: 12px;
    flex: none;
}
svg.sprite {
    display: block;
    width: 0;
    height: 0;
}
svg.caret {
    width: 6px;
    height: 4px;
}
svg.caret.s {
    width: 4px;
    height: 3px;
}
.app {
    display: flex;
    flex-direction: column;
    margin: 17px 0 0 8px;
    width: 1272px;
    height: 692px;
    background-color: #222b33;
}

/* title bar and menus */
.top {
    display: flex;
    height: 30px;
    border-bottom: 1px solid #39424c;
}
svg.logo {
    width: 18px;
    height: 20px;
    margin: 4px 7px 0 5px;
}
.titlebar {
    display: flex;
    align-items: center;
    height: 16px;
    width: 1242px;
}
.qat {
    display: grid;
    grid-template-columns: repeat(8, 16px) 7px 16px 8px 16px 16px;
    align-items: center;
    justify-items: center;
    width: 193px;
}
.combo {
    display: flex;
    align-items: center;
    height: 14px;
    background-color: #495363;
    color: #e4e7ea;
}
.combo .caret {
    margin-left: auto;
    margin-right: 1px;
}
.workspace {
    width: 118px;
    background-color: #3a4350;
}
.workspace span {
    margin-left: 2px;
    letter-spacing: -0.15px;
}
.layer-top {
    width: 118px;
    margin-left: 3px;
    background-color: #323b47;
}
.layer-top svg + svg:not(.caret) {
    margin-left: 1px;
}
.layer svg + svg:not(.caret) {
    margin-left: 1px;
}
.layer-top span, .layer span {
    margin-left: 2px;
}
.more {
    margin-left: 2px;
    border-top: 1px solid #ccc;
}
.doc-title {
    display: flex;
    width: 424px;
    padding-left: 55px;
    gap: 7px;
    color: #eceef0;
}
.arrow {
    width: 8px;
    font-size: 6px;
}
.search {
    width: 118px;
    height: 14px;
    line-height: 14px;
    padding-left: 1px;
    background-color: #3e4757;
    color: #b2b8c2;
    font-style: italic;
    letter-spacing: -0.1px;
}
.account {
    display: grid;
    grid-template-columns: 16px 17px 54px 8px 17px 16px 8px 6px 18px 8px;
    align-items: center;
    justify-items: center;
    width: 168px;
    color: #eceef0;
}
.account span {
    justify-self: start;
    padding-left: 1px;
}
.sep {
    width: 1px;
    height: 12px;
    background-color: #454e58;
}
.help {
    width: 11px;
    height: 11px;
    border-radius: 50%;
    background-color: #e5e5e5;
    color: #222b33;
    line-height: 11px;
    text-align: center;
}
.winbtns {
    display: flex;
    gap: 4px;
    margin-left: 43px;
}
.menubar {
    display: grid;
    grid-template-columns: 39px 41px 49.5px 47px 41.5px 36px 39px 46.5px 61.5px 63px 42px 16px 52.5px 49px 48.5px 54px 50px 58.5px 372px 12px 12px 12px;
    align-items: center;
    height: 14px;
    padding-left: 6px;
    color: #a9afb7;
    letter-spacing: -0.15px;
}

/* ribbon */
.ribbon-tabs {
    display: grid;
    grid-template-columns: 35px 45px 41px 61px 27px 32px 33px 57px 14px 10px;
    align-items: center;
    height: 14px;
    padding-top: 2px;
    color: #b5bac1;
    letter-spacing: -0.15px;
}
.ribbon-tabs span {
    line-height: 12px;
    padding-left: 7.500px;
}
.ribbon-tabs .active {
    background-color: #3c4553;
    color: #eceef0;
}
.mini {
    width: 11px;
    height: 6px;
    margin-left: 7px;
    background-color: #dfe2e5;
    color: #333;
    font-size: 6px;
    line-height: 6px;
    text-align: center;
}
.ribbon-tabs .caret {
    margin-left: 7px;
}
.ribbon {
    display: flex;
    height: 64px;
    background-color: #3c4553;
    color: #e1e4e8;
    letter-spacing: -0.2px;
}
.panel {
    display: flex;
    flex-direction: column;
    flex: none;
    padding-top: 2px;
    border-right: 1px solid #2a323d;
}
.dessin { width: 157px; }
.modification { width: 191px; }
.annotation { width: 144px; }
.calques { width: 184px; }
.bloc { width: 119px; }
.proprietes { width: 187px; }
.groupes { width: 53px; }
.utilitaires { width: 63px; }
.presse { width: 58px; }
.vue {
    width: 116px;
    border-right: 0;
}
.tools {
    display: flex;
    height: 48px;
}
.panel h2 {
    display: flex;
    align-items: center;
    justify-content: center;
    gap: 4px;
    margin: 0;
    height: 14px;
    padding-top: 3px;
    font-size: 8.200px;
    font-weight: normal;
}
.vue h2 {
    justify-content: flex-start;
    padding-left: 4px;
}
svg.corner {
    width: 5px;
    height: 5px;
}
.proprietes .corner {
    margin-left: 65px;
    margin-right: -74px;
}
.big {
    display: flex;
    flex-direction: column;
    align-items: center;
    flex: none;
    line-height: 10px;
    text-align: center;
}
.big svg:first-child {
    width: 24px;
    height: 24px;
    margin-bottom: 2px;
}
.big .caret {
    margin-top: 1px;
}
.low {
    padding-top: 4px;
}
.w24 { width: 25px; }
.w28 { width: 28px; }
.w29 { width: 29px; }
.w34 { width: 34px; }
.w39 { width: 39px; }
.w40 { width: 41px; }
.w45 { width: 45px; }
.w52 { width: 52px; }
.col.w54 { width: 54px; }
.col.w62 { width: 62px; }
.col.w14 { width: 14px; }
.tool {
    display: flex;
    align-items: center;
    height: 16px;
    padding-left: 3px;
    gap: 3px;
}
.tool .caret {
    margin-left: 3px;
}
.lays {
    padding-left: 2px;
    gap: 4px;
}
.lays span {
    margin-left: -1px;
}
.layer {
    width: 138px;
    margin: 1px 0;
    padding-left: 2px;
}
.proprietes .tool {
    padding-left: 1px;
}
.combos .combo {
    width: 119px;
    margin: 1px 0 2px;
}
.swatch {
    margin: 0 6px;
}
.rule {
    width: 43px;
    height: 1px;
    margin: 0 1px 0 2px;
    background-color: #dfe2e5;
}
.on {
    background-color: #3d607c;
    outline: 1px solid #7db4dd;
    outline-offset: -1px;
}
.groupes .tool {
    width: 16px;
    padding-left: 2px;
}

/* drawing tabs */
.file-tabs {
    display: flex;
    align-items: center;
    height: 21px;
    padding: 4px 0 0 10px;
    border-bottom: 3px solid #3b4452;
    color: #a5abb4;
}
.ftab {
    display: flex;
    align-items: center;
    height: 14px;
    padding-left: 10px;
    border-radius: 7px 8px 0 0;
    background-color: #29323b;
}
.start { width: 84px; }
.second { width: 128px; }
.ftab.second { padding-left: 8px; }
.current {
    width: 120px;
    background-color: #3b4452;
    color: #f0f2f4;
}
.ftab i {
    margin-left: auto;
    margin-right: 5px;
}
.addtab {
    width: 14px;
    height: 12px;
    margin-left: 8px;
    border-radius: 7px;
    background-color: #2d3640;
    color: #cfd3d8;
    font-size: 11px;
    line-height: 12px;
    text-align: center;
}

/* recovery manager */
.work {
    display: flex;
    height: 543px;
}
.side {
    width: 181px;
    background-color: #2c3440;
    border-right: 2px solid #2f3843;
}
.side-title {
    display: flex;
    align-items: center;
    height: 15px;
    gap: 4px;
    padding-left: 3px;
    background-color: #303945;
}
.side-title span {
    letter-spacing: -0.4px;
}
.grip {
    width: 3px;
    height: 7px;
    border: 1px dotted #9aa1ab;
}
.side-head {
    display: flex;
    align-items: center;
    justify-content: space-between;
    height: 16px;
    padding: 0 4px 0 6px;
    border-top: 1px solid #232b34;
    border-bottom: 1px solid #232b34;
    background-color: #2d3641;
    color: #f0f2f4;
    font-weight: bold;
    letter-spacing: -0.4px;
}
.tree {
    display: flex;
    justify-content: space-between;
    height: 141px;
    overflow: hidden;
    background-color: #3c4553;
}
.tree ul {
    margin: 0 0 0 6px;
    padding: 1px 0 0;
    list-style: none;
}
.tree li {
    display: flex;
    align-items: center;
    height: 11.930px;
    gap: 3px;
}
.tree li i {
    width: 6px;
    height: 6px;
    margin-top: 1px;
    margin-left: -1px;
    background-color: #dfe2e5;
    color: #28303a;
    font-size: 7px;
    font-weight: bold;
    line-height: 6px;
    text-align: center;
}
.scrollbar {
    display: flex;
    flex-direction: column;
    width: 11px;
    margin-right: 1px;
    background-color: #eef0f0;
}
.thumb {
    height: 33px;
    margin: 3px 0 auto 1px;
    background-color: #c9cccb;
}
.splitter {
    display: flex;
    justify-content: center;
    height: 5px;
    padding-top: 3px;
}
.splitter i {
    width: 13px;
    border-top: 1px dotted #dfe2e5;
}
.side-body {
    background-color: #3c4553;
}
.etat {
    height: 222px;
    border-bottom: 2px solid #343d49;
    margin-bottom: 4px;
}
.apercu {
    height: 105px;
}

/* model space */
.canvas {
    position: relative;
    width: 1091px;
    background-color: #000;
}
svg.drawing {
    display: block;
    width: 1091px;
    height: 543px;
}
.thin {
    fill: none;
    stroke: #a6a6a6;
}
.thick {
    fill: none;
    stroke: #fff;
    stroke-width: 3;
}
.annot text {
    font-family: "DejaVu Sans", sans-serif;
    fill: #fbfbfb;
    letter-spacing: 0;
}
.coords text {
    font-family: "DejaVu Sans Light", "DejaVu Sans", sans-serif;
    font-weight: 200;
    letter-spacing: 0;
    fill: #e2e2e2;
}
.coords .dim1 {
    fill: #2c2c2c;
}
.coords .dim2 {
    fill: #835024;
}
.ucs path {
    fill: none;
    stroke: #bdbdbd;
}
.viewcube text {
    fill: #c2c2c2;
    font-size: 13px;
    font-weight: bold;
    text-anchor: middle;
}
.viewcube .haut {
    fill: #3c3c3c;
    font-size: 10px;
    text-anchor: start;
}
.viewcube .scg {
    fill: #3b3b3b;
    font-size: 7.500px;
    font-weight: normal;
}
.cmdline {
    position: absolute;
    left: 219px;
    top: 525px;
    display: flex;
    width: 658px;
    height: 18px;
}
.cmd-tools {
    display: flex;
    align-items: center;
    width: 37px;
    gap: 3px;
    padding-left: 3px;
    background-color: #20242e;
}
.cmd-tools svg {
    width: 11px;
    height: 11px;
}
.cmd-tools svg:nth-child(2) {
    margin-left: -2px;
}
.dots {
    width: 4px;
    height: 12px;
    border-left: 1px dotted #bbb;
    border-right: 1px dotted #bbb;
}
.cmd-input {
    display: flex;
    align-items: center;
    flex: 1;
    padding-left: 3px;
    background-color: #b0b4b2;
    color: #5d6262;
    font-family: "DejaVu Sans Mono", monospace;
    font-size: 8px;
    letter-spacing: -0.15px;
}
.cmd-input span {
    width: 417px;
    margin-left: 5px;
    font-style: italic;
}
.bars {
    width: 4px;
    height: 7px;
    border-left: 1px solid #e2e2e2;
    border-right: 1px solid #e2e2e2;
}
.cmd-input .up {
    margin-left: auto;
    margin-right: 2px;
    color: #222;
}

/* layout tabs and status bar */
.bottom {
    display: flex;
    justify-content: space-between;
    height: 20px;
    background-color: #222b33;
    border-bottom: 1px solid #343d45;
}
.layouts {
    display: flex;
    align-items: center;
    height: 12px;
    gap: 2px;
    padding-left: 10px;
    color: #9299a2;
}
.layouts span {
    padding: 0 6px;
    border-radius: 0 0 6px 6px;
    background-color: #2f3843;
    line-height: 11px;
}
.layouts span:nth-child(3) {
    margin-left: 4px;
}
.layouts b {
    padding-left: 6px;
    color: #cfd3d8;
    font-size: 11px;
    font-weight: normal;
}
.status {
    display: grid;
    grid-template-columns: 17px 29px 17px 17px 10px 17px 17px 10px 16px 11px 16px 16px 10px 16px 16px 16px 15px 10px 19px 10px 17px 20px 14px 14px 17px 21px 10px;
    align-items: center;
    justify-items: center;
    width: 417px;
    height: 18px;
    background-color: #333c49;
}
.status .on {
    width: 15px;
    height: 15px;
    padding: 2px;
    background-color: #5b8cc4;
    outline: 0;
}
.zfet {
    font-size: 7.500px;
    line-height: 7px;
    text-align: center;
}
.objet, .ratio {
    color: #eceef0;
    font-weight: bold;
    font-size: 8px;
}

/* recorder badge, over everything */
.watermark {
    position: absolute;
    left: 11px;
    top: 669px;
    color: #fff;
    font-family: Lato, sans-serif;
    font-weight: bold;
    text-shadow: 0 0 2px #000;
}
.rec {
    font-size: 7.800px;
    line-height: 11px;
    letter-spacing: 0;
}
.brand {
    display: flex;
    align-items: center;
    gap: 4px;
    font-size: 12px;
    letter-spacing: 0.15px;
}
.brand svg {
    width: 22px;
    height: 22px;
}
```
